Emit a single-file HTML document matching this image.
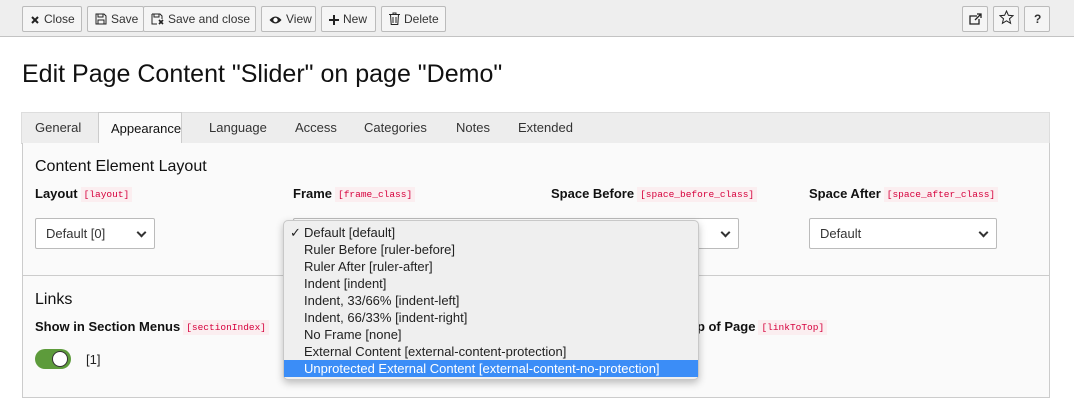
<!DOCTYPE html>
<html><head><meta charset="utf-8"><style>
*{box-sizing:border-box;margin:0;padding:0}
body{width:1074px;height:404px;overflow:hidden;background:#fff;font-family:"Liberation Sans","DejaVu Sans",sans-serif;font-size:13px;color:#212121;position:relative}
.tb{position:absolute;left:0;top:0;width:1074px;height:37px;background:#eee;border-bottom:1px solid #c3c3c3}
.b{position:absolute;top:6px;height:26px;border:1px solid #bbb;background:#f5f5f5;border-radius:2px;font-size:12px;line-height:24px;padding-left:7px;color:#333;white-space:nowrap}
.b svg{vertical-align:-2px;margin-right:4px}
h1{position:absolute;left:22px;top:60px;font-size:25px;font-weight:normal;color:#111}
.tabs{position:absolute;left:21px;top:112px;width:1029px;height:32px;background:#ededed;border:1px solid #ddd;border-bottom:1px solid #ccc}
.tab{position:absolute;top:0;height:31px;line-height:30px;font-size:13px;color:#333}
.tab.a{background:#fafafa;border:1px solid #ccc;border-bottom:none;top:-1px;height:33px;line-height:32px;color:#111}
.panel{position:absolute;left:22px;top:143px;width:1028px;height:255px;background:#fafafa;border:1px solid #ccc;border-top:none}
.h{position:absolute;font-size:16px;color:#111}
.l{position:absolute;font-weight:bold;font-size:13px;color:#111}
.l code{font-family:"Liberation Mono",monospace;font-weight:normal;font-size:9.5px;color:#d6003c;background:#fbeef0;padding:2px 3px;margin-left:3px;vertical-align:1px}
.sel{position:absolute;top:218px;height:31px;border:1px solid #bbb;background:#fff;border-radius:2px;line-height:29px;padding-left:10px;color:#333}
.sel:after{content:"";position:absolute;right:9px;top:10px;width:5px;height:5px;border-right:2px solid #333;border-bottom:2px solid #333;transform:rotate(45deg)}
.dd{position:absolute;left:283px;top:220px;width:416px;height:160px;background:#efefef;border:1px solid #c8c8c8;border-radius:5px;box-shadow:0 3px 8px rgba(0,0,0,.25);padding-top:3px;font-size:13px;color:#222}
.dd div{height:17px;line-height:17px;padding-left:20px;position:relative}
.dd .hl{background:#3b8df7;color:#fff}
</style></head><body>
<div class="tb">
<div class="b" style="left:22px;width:60px"><svg width="10" height="10" viewBox="0 0 10 10"><path d="M2 2L8 8M8 2L2 8" stroke="#222" stroke-width="2"/></svg>Close</div>
<div class="b" style="left:87px;width:57px"><svg width="12" height="12" viewBox="0 0 12 12"><path d="M1 1h8l2 2v8H1z M3 1v3h5V1 M3 11V7h6v4" fill="none" stroke="#222"/></svg>Save</div>
<div class="b" style="left:143px;width:113px"><svg width="13" height="12" viewBox="0 0 13 12"><path d="M1 1h8l2 2v3 M1 1v10h5 M3 1v3h5V1" fill="none" stroke="#222"/><path d="M8 7l4 4M12 7l-4 4" stroke="#222" stroke-width="1.6"/></svg>Save and close</div>
<div class="b" style="left:261px;width:55px"><svg width="13" height="10" viewBox="0 0 13 10"><path d="M0.5 5Q6.5-2 12.5 5Q6.5 12 0.5 5z" fill="#222"/><circle cx="6.5" cy="5" r="2.2" fill="#fff"/></svg>View</div>
<div class="b" style="left:321px;width:55px"><svg width="10" height="10" viewBox="0 0 10 10"><path d="M5 0v10M0 5h10" stroke="#222" stroke-width="2"/></svg>New</div>
<div class="b" style="left:381px;width:65px"><svg width="11" height="13" viewBox="0 0 11 13"><path d="M0 2.5h11M4 2.5V1h3v1.5M1.5 2.5l.7 10h6.6l.7-10M4 5v6M7 5v6" fill="none" stroke="#222"/></svg>Delete</div>
<div class="b" style="left:962px;width:26px;padding-left:6px"><svg width="13" height="12" viewBox="0 0 13 12"><path d="M8 3H1v8h9V6" fill="none" stroke="#222" stroke-width="1.3"/><path d="M6 7l6-6M8 1h4v4" fill="none" stroke="#222" stroke-width="1.3"/></svg></div>
<div class="b" style="left:993px;width:26px;padding-left:5px"><svg width="15" height="15" viewBox="0 0 15 15"><path d="M7.5 1l1.9 4.3 4.6.4-3.5 3 1.1 4.6-4.1-2.5-4.1 2.5 1.1-4.6-3.5-3 4.6-.4z" fill="none" stroke="#222"/></svg></div>
<div class="b" style="left:1024px;width:26px;padding-left:9px;font-weight:bold">?</div>
</div>
<h1>Edit Page Content "Slider" on page "Demo"</h1>
<div class="tabs">
<div class="tab" style="left:13px">General</div>
<div class="tab a" style="left:76px;width:84px;padding-left:12px">Appearance</div>
<div class="tab" style="left:187px">Language</div>
<div class="tab" style="left:273px">Access</div>
<div class="tab" style="left:342px">Categories</div>
<div class="tab" style="left:434px">Notes</div>
<div class="tab" style="left:496px">Extended</div>
</div>
<div class="panel"><div style="position:absolute;left:0;top:132px;width:1027px;border-top:1px solid #ccc"></div></div>
<div class="h" style="left:35px;top:158px">Content Element Layout</div>
<div class="l" style="left:35px;top:186px">Layout<code>[layout]</code></div>
<div class="l" style="left:293px;top:186px">Frame<code>[frame_class]</code></div>
<div class="l" style="left:551px;top:186px">Space Before<code>[space_before_class]</code></div>
<div class="l" style="left:809px;top:186px">Space After<code>[space_after_class]</code></div>
<div class="sel" style="left:35px;width:120px">Default [0]</div>
<div class="sel" style="left:293px;width:446px"></div>
<div class="sel" style="left:809px;width:188px">Default</div>
<div class="h" style="left:35px;top:291px">Links</div>
<div class="l" style="left:35px;top:319px">Show in Section Menus<code>[sectionIndex]</code></div>
<div class="l" style="left:600px;top:319px;background:#fafafa;padding-left:89px">op of Page<code>[linkToTop]</code></div>
<div style="position:absolute;left:35px;top:349px;width:36px;height:20px;border-radius:10px;background:#5d9b3b"></div>
<div style="position:absolute;left:52px;top:351px;width:16px;height:16px;border-radius:8px;background:#fff;border:1.5px solid #333"></div>
<div style="position:absolute;left:86px;top:352px;font-size:13px">[1]</div>
<div class="dd">
<div><span style="position:absolute;left:6px">✓</span>Default [default]</div>
<div>Ruler Before [ruler-before]</div>
<div>Ruler After [ruler-after]</div>
<div>Indent [indent]</div>
<div>Indent, 33/66% [indent-left]</div>
<div>Indent, 66/33% [indent-right]</div>
<div>No Frame [none]</div>
<div>External Content [external-content-protection]</div>
<div class="hl">Unprotected External Content [external-content-no-protection]</div>
</div>
</body></html>
